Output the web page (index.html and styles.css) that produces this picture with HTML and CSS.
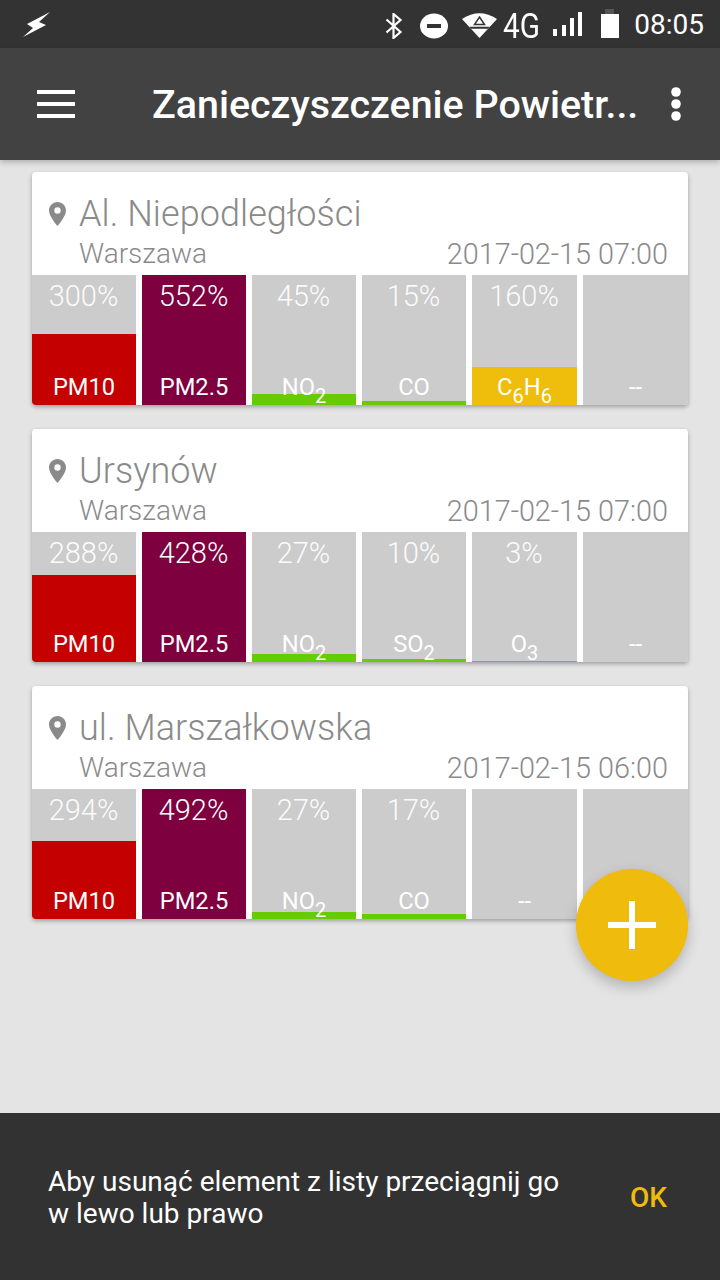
FILE: index.html
```html
<!DOCTYPE html>
<html lang="pl">
<head>
<meta charset="utf-8">
<title>Zanieczyszczenie Powietrza</title>
<link rel="stylesheet" href="styles.css">
</head>
<body>
<div class="screen">
  <div class="status">
    <svg class="flash" width="32" height="30" viewBox="0 0 32 30"><path d="M29 3 L6 15 L12 19 L2 28 L25 16 L18 13 Z" fill="#fff"/></svg>
    <div class="status-right">
      <svg class="s-bt" width="18" height="26" viewBox="0 0 18 26"><path d="M1.500 6.500 L15.500 19 L8.500 25 V1 L15.500 7 L1.500 19.500" fill="none" stroke="#fff" stroke-width="2.200"/></svg>
      <svg class="s-dnd" width="28" height="26" viewBox="0 0 28 26"><ellipse cx="14" cy="13" rx="14" ry="12.500" fill="#fff"/><rect x="7" y="11" width="14" height="4" fill="#333"/></svg>
      <svg class="s-wifi" width="35" height="26" viewBox="0 0 35 26"><path d="M0 7 Q17.500 -4.500 35 7 L17.500 26 Z" fill="#fff"/><path d="M7.500 14.800 H27.500 L26 16.800 H9 Z" fill="#333"/><path d="M17.500 5 L22.500 12.500 H12.500 Z" fill="none" stroke="#333" stroke-width="1.500"/></svg>
      <span class="s-4g"><span class="s-4g-text">4G</span></span>
      <svg class="s-sig" width="29" height="26" viewBox="0 0 29 26"><rect x="0" y="17" width="4" height="7" fill="#fff"/><rect x="9" y="13" width="4" height="11" fill="#fff"/><rect x="17" y="6" width="4" height="18" fill="#fff"/><rect x="25" y="0" width="4" height="24" fill="#fff"/></svg>
      <svg class="s-bat" width="18" height="30" viewBox="0 0 18 30"><rect x="4" y="0" width="9" height="5" fill="#555"/><rect x="0" y="5" width="18" height="24" fill="#fff"/></svg>
      <span class="s-time">08:05</span>
    </div>
  </div>
  <header class="appbar">
    <svg class="menu" width="38" height="28" viewBox="0 0 38 28"><rect y="0" width="38" height="4" fill="#fff"/><rect y="12" width="38" height="4" fill="#fff"/><rect y="24" width="38" height="4" fill="#fff"/></svg>
    <h1 class="title">Zanieczyszczenie Powietr...</h1>
    <svg class="more" width="10" height="34" viewBox="0 0 10 34"><circle cx="5" cy="5" r="4.800" fill="#fff"/><circle cx="5" cy="17" r="4.800" fill="#fff"/><circle cx="5" cy="29" r="4.800" fill="#fff"/></svg>
  </header>
  <main class="list">
    <article class="card">
      <div class="head">
        <div class="name-row">
          <svg class="pin" width="17" height="24" viewBox="0 0 17 24"><path fill-rule="evenodd" d="M8.500 0 C3.800 0 0 3.800 0 8.500 C0 14.500 8.500 24 8.500 24 S17 14.500 17 8.500 C17 3.800 13.200 0 8.500 0 Z M8.500 5.300 A3.200 3.200 0 1 1 8.500 11.700 A3.200 3.200 0 1 1 8.500 5.300 Z" fill="#8a8a8a"/></svg>
          <span class="name">Al. Niepodległości</span>
        </div>
        <div class="meta"><span>Warszawa</span><span class="date">2017-02-15 07:00</span></div>
      </div>
      <div class="bars">
        <div class="bar"><div class="fill red" style="height:71px"></div><span class="pct">300%</span><span class="lab">PM10</span></div>
        <div class="bar"><div class="fill plum" style="height:130px"></div><span class="pct strong">552%</span><span class="lab">PM2.5</span></div>
        <div class="bar"><div class="fill green" style="height:11px"></div><span class="pct">45%</span><span class="lab">NO<sub>2</sub></span></div>
        <div class="bar"><div class="fill green" style="height:4px"></div><span class="pct">15%</span><span class="lab">CO</span></div>
        <div class="bar"><div class="fill amber" style="height:38px"></div><span class="pct">160%</span><span class="lab">C<sub>6</sub>H<sub>6</sub></span></div>
        <div class="bar"><span class="lab">--</span></div>
      </div>
    </article>
    <article class="card">
      <div class="head">
        <div class="name-row">
          <svg class="pin" width="17" height="24" viewBox="0 0 17 24"><path fill-rule="evenodd" d="M8.500 0 C3.800 0 0 3.800 0 8.500 C0 14.500 8.500 24 8.500 24 S17 14.500 17 8.500 C17 3.800 13.200 0 8.500 0 Z M8.500 5.300 A3.200 3.200 0 1 1 8.500 11.700 A3.200 3.200 0 1 1 8.500 5.300 Z" fill="#8a8a8a"/></svg>
          <span class="name">Ursynów</span>
        </div>
        <div class="meta"><span>Warszawa</span><span class="date">2017-02-15 07:00</span></div>
      </div>
      <div class="bars">
        <div class="bar"><div class="fill red" style="height:87px"></div><span class="pct">288%</span><span class="lab">PM10</span></div>
        <div class="bar"><div class="fill plum" style="height:130px"></div><span class="pct strong">428%</span><span class="lab">PM2.5</span></div>
        <div class="bar"><div class="fill green" style="height:8px"></div><span class="pct">27%</span><span class="lab">NO<sub>2</sub></span></div>
        <div class="bar"><div class="fill green" style="height:3px"></div><span class="pct">10%</span><span class="lab">SO<sub>2</sub></span></div>
        <div class="bar"><div class="fill green" style="height:1px"></div><span class="pct">3%</span><span class="lab">O<sub>3</sub></span></div>
        <div class="bar"><span class="lab">--</span></div>
      </div>
    </article>
    <article class="card">
      <div class="head">
        <div class="name-row">
          <svg class="pin" width="17" height="24" viewBox="0 0 17 24"><path fill-rule="evenodd" d="M8.500 0 C3.800 0 0 3.800 0 8.500 C0 14.500 8.500 24 8.500 24 S17 14.500 17 8.500 C17 3.800 13.200 0 8.500 0 Z M8.500 5.300 A3.200 3.200 0 1 1 8.500 11.700 A3.200 3.200 0 1 1 8.500 5.300 Z" fill="#8a8a8a"/></svg>
          <span class="name">ul. Marszałkowska</span>
        </div>
        <div class="meta"><span>Warszawa</span><span class="date">2017-02-15 06:00</span></div>
      </div>
      <div class="bars">
        <div class="bar"><div class="fill red" style="height:78px"></div><span class="pct">294%</span><span class="lab">PM10</span></div>
        <div class="bar"><div class="fill plum" style="height:130px"></div><span class="pct strong">492%</span><span class="lab">PM2.5</span></div>
        <div class="bar"><div class="fill green" style="height:7px"></div><span class="pct">27%</span><span class="lab">NO<sub>2</sub></span></div>
        <div class="bar"><div class="fill green" style="height:5px"></div><span class="pct">17%</span><span class="lab">CO</span></div>
        <div class="bar"><span class="lab">--</span></div>
        <div class="bar"></div>
      </div>
    </article>
    <button class="fab" aria-label="Dodaj"><svg width="48" height="48" viewBox="0 0 48 48"><path d="M21 0 H27 V21 H48 V27 H27 V48 H21 V27 H0 V21 H21 Z" fill="#fff"/></svg></button>
  </main>
  <footer class="snack">
    <p class="snack-text">Aby usunąć element z listy przeciągnij go<br>w lewo lub prawo</p>
    <span class="snack-ok">OK</span>
  </footer>
</div>
</body>
</html>
```
FILE: styles.css
```css
* { box-sizing: border-box; }
html, body { margin: 0; padding: 0; }
body { font-family: Roboto, "Noto Sans", sans-serif; background: #e4e4e4; }
.screen { width: 720px; height: 1280px; display: flex; flex-direction: column; overflow: hidden; }

.status { height: 48px; flex: none; background: #333; display: flex; align-items: center; justify-content: space-between; padding: 0 16px 0 21px; color: #fff; }
.flash { filter: blur(.7px); margin-top: -1px; }
.status-right { display: flex; align-items: center; }
.s-bt { margin-right: 17px; margin-top: 3px; }
.s-dnd { margin-right: 14px; margin-top: 3px; }
.s-wifi { margin-right: 6px; margin-top: 2px; }
.s-4g { font-size: 35px; line-height: 48px; font-weight: 400; width: 37px; margin-right: 13px; white-space: nowrap; margin-top: 5px; }
.s-4g-text { display: inline-block; transform: scaleX(.85); transform-origin: left center; }
.s-sig { margin-right: 19px; margin-top: 2px; }
.s-bat { margin-right: 15px; margin-top: -1px; }
.s-time { font-size: 28px; font-weight: 400; }

.appbar { height: 112px; flex: none; background: #424242; display: flex; align-items: center; padding: 0 39px 0 37px; color: #fff; position: relative; z-index: 2; box-shadow: 0 2px 6px rgba(0,0,0,.25); }
.menu { flex: none; }
.title { margin: 0 0 0 77px; flex: 1; font-size: 39.4px; font-weight: 500; white-space: nowrap; }
.more { flex: none; }

.list { flex: 1; position: relative; padding: 12px 32px 0; display: flex; flex-direction: column; gap: 24px; }
.card { height: 233px; background: #fff; border-radius: 4px; display: flex; flex-direction: column; box-shadow: 0 2px 4px rgba(0,0,0,.3); }
.head { height: 103px; flex: none; padding: 22px 20px 0 17px; color: #8a8a8a; }
.name-row { display: flex; align-items: center; height: 40px; }
.pin { margin-right: 13px; flex: none; }
.name { font-size: 36px; font-weight: 300; letter-spacing: .06px; white-space: nowrap; }
.meta { display: flex; justify-content: space-between; font-size: 28px; font-weight: 300; padding-left: 30px; line-height: 36px; margin-top: 2px; }
.date { font-size: 28.8px; color: #8a8a8a; }

.bars { flex: 1; display: grid; grid-template-columns: 104px 104px 104px 104px 105px 105px; column-gap: 6px; }
.bar { position: relative; background: #ccc; color: #fff; text-align: center; }
.bar:first-child, .bar:first-child .fill { border-bottom-left-radius: 4px; }
.bar:last-child { border-bottom-right-radius: 4px; }
.fill { position: absolute; left: 0; right: 0; bottom: 0; }
.red { background: #c40000; }
.plum { background: #7e003e; }
.green { background: #64cc00; }
.amber { background: #efbd0c; }
.pct { position: absolute; left: 0; right: 1px; top: 3px; font-size: 29px; font-weight: 300; line-height: 36px; color: rgba(255,255,255,.95); }
.pct.strong { color: #fff; }
.lab { position: absolute; left: 0; right: 0; bottom: 2px; font-size: 23.7px; line-height: 32px; color: #fff; font-weight: 400; }
.lab sub { font-size: 20px; line-height: 0; vertical-align: -8px; }

.fab { position: absolute; right: 32px; top: 709px; width: 112px; height: 112px; border: 0; padding: 0; border-radius: 50%; background: #efbb0c; display: flex; align-items: center; justify-content: center; box-shadow: 0 6px 14px rgba(0,0,0,.22); }

.snack { height: 167px; flex: none; background: #323232; display: flex; align-items: center; justify-content: space-between; padding: 2px 53px 0 48px; color: #fff; }
.snack-text { margin: 0; font-size: 28px; line-height: 32px; }
.snack-ok { font-size: 28px; font-weight: 500; color: #efbb0c; }
```
